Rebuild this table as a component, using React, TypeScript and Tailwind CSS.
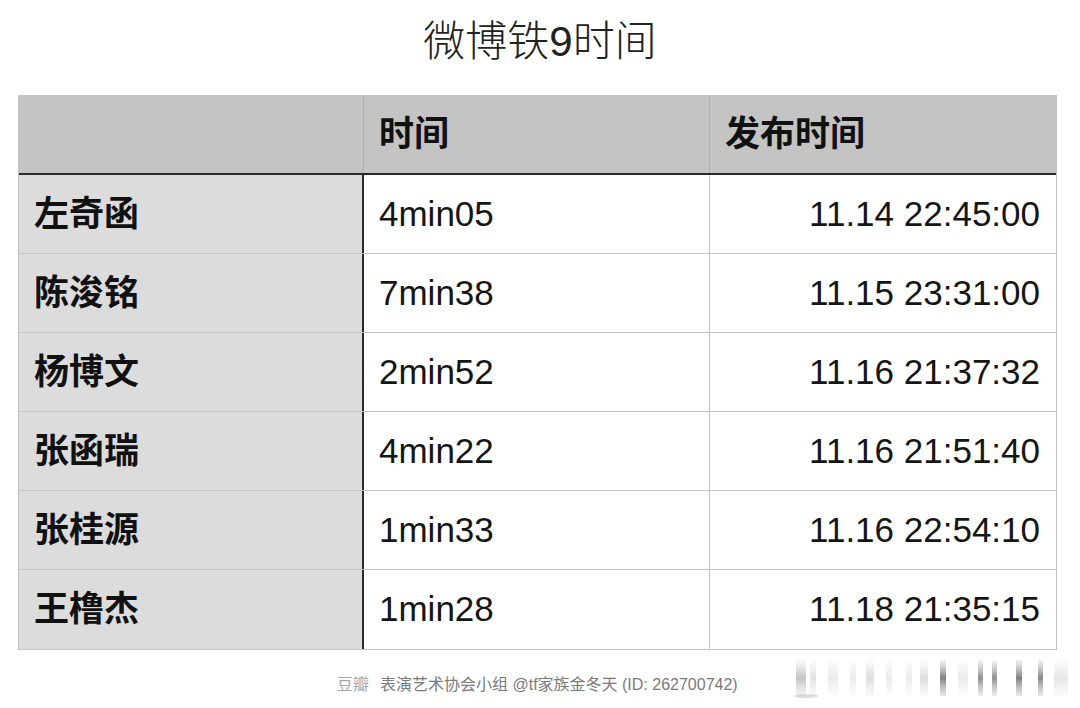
import React from "react";

const rows = [
  ["左奇函", "4min05", "11.14 22:45:00"],
  ["陈浚铭", "7min38", "11.15 23:31:00"],
  ["杨博文", "2min52", "11.16 21:37:32"],
  ["张函瑞", "4min22", "11.16 21:51:40"],
  ["张桂源", "1min33", "11.16 22:54:10"],
  ["王橹杰", "1min28", "11.18 21:35:15"],
];

const cjk = { fontFamily: '"Liberation Sans", "Noto Sans CJK SC", sans-serif' };

function Logo() {
  const bars = [
    [8, 10, 0.35], [22, 6, 0.18], [40, 10, 0.12], [62, 6, 0.12], [78, 8, 0.2],
    [98, 6, 0.12], [118, 6, 0.12], [132, 8, 0.2], [152, 6, 0.75], [170, 10, 0.12],
    [190, 5, 0.65], [204, 5, 0.65], [228, 6, 0.75], [250, 5, 0.7], [266, 14, 0.15],
  ];
  return (
    <svg width="285" height="46" viewBox="0 0 285 46">
      <defs>
        <linearGradient id="fade" x1="0" y1="0" x2="0" y2="1">
          <stop offset="0" stopColor="#888" stopOpacity="0.15" />
          <stop offset="0.5" stopColor="#555" stopOpacity="1" />
          <stop offset="1" stopColor="#999" stopOpacity="0.3" />
        </linearGradient>
      </defs>
      {bars.map(([x, w, o], i) => (
        <rect key={i} x={x} y={6} width={w} height={36} fill="url(#fade)" opacity={o} />
      ))}
      <ellipse cx="18" cy="42" rx="12" ry="2" fill="#bbb" opacity="0.5" />
    </svg>
  );
}

export default function App() {
  return (
    <div className="w-[1080px] h-[708px] bg-white overflow-hidden flex flex-col" style={cjk}>
      <div className="h-[95px] flex items-start justify-center pt-[14px]">
        <span className="text-[42px] font-light text-[#222] leading-[56px]">微博铁9时间</span>
      </div>
      <div className="ml-[18px] w-[1039px] border border-[#c4c4c4]">
        <div className="grid grid-cols-[345px_346px_1fr] h-[79px] bg-[#c3c4c3] border-b-2 border-[#2a2a2a]">
          <div className="border-r border-[#b0b0b0]" />
          <div className="border-r border-[#b0b0b0] flex items-center pl-[15px] text-[35px] font-bold text-[#111]">时间</div>
          <div className="flex items-center pl-[15px] text-[35px] font-bold text-[#111]">发布时间</div>
        </div>
        {rows.map(([name, t, d], i) => (
          <div
            key={i}
            className={`grid grid-cols-[345px_346px_1fr] h-[79px] ${i < rows.length - 1 ? "border-b border-[#c4c4c4]" : ""}`}
          >
            <div className="bg-[#dcdcdc] border-r-2 border-[#2a2a2a] flex items-center pl-[15px] text-[35px] font-bold text-[#111]">
              {name}
            </div>
            <div className="border-r border-[#c4c4c4] flex items-center pl-[15px] text-[35px] text-[#151515]">{t}</div>
            <div className="flex items-center justify-end pr-[16px] text-[35px] text-[#151515]">{d}</div>
          </div>
        ))}
      </div>
      <div className="flex-1 relative">
        <div
          className="absolute left-[337px] top-[25px] text-[16px] leading-[20px] text-[#7a7a7a] whitespace-nowrap"
          style={{ textShadow: "0 0 1px #fff, 0 0 2px #fff" }}
        >
          <span className="text-[#a8a8a8]">豆瓣</span>
          <span className="ml-[11px]">表演艺术协会小组 @tf家族金冬天 (ID: 262700742)</span>
        </div>
        <div className="absolute left-[788px] top-[4px]">
          <Logo />
        </div>
      </div>
    </div>
  );
}
